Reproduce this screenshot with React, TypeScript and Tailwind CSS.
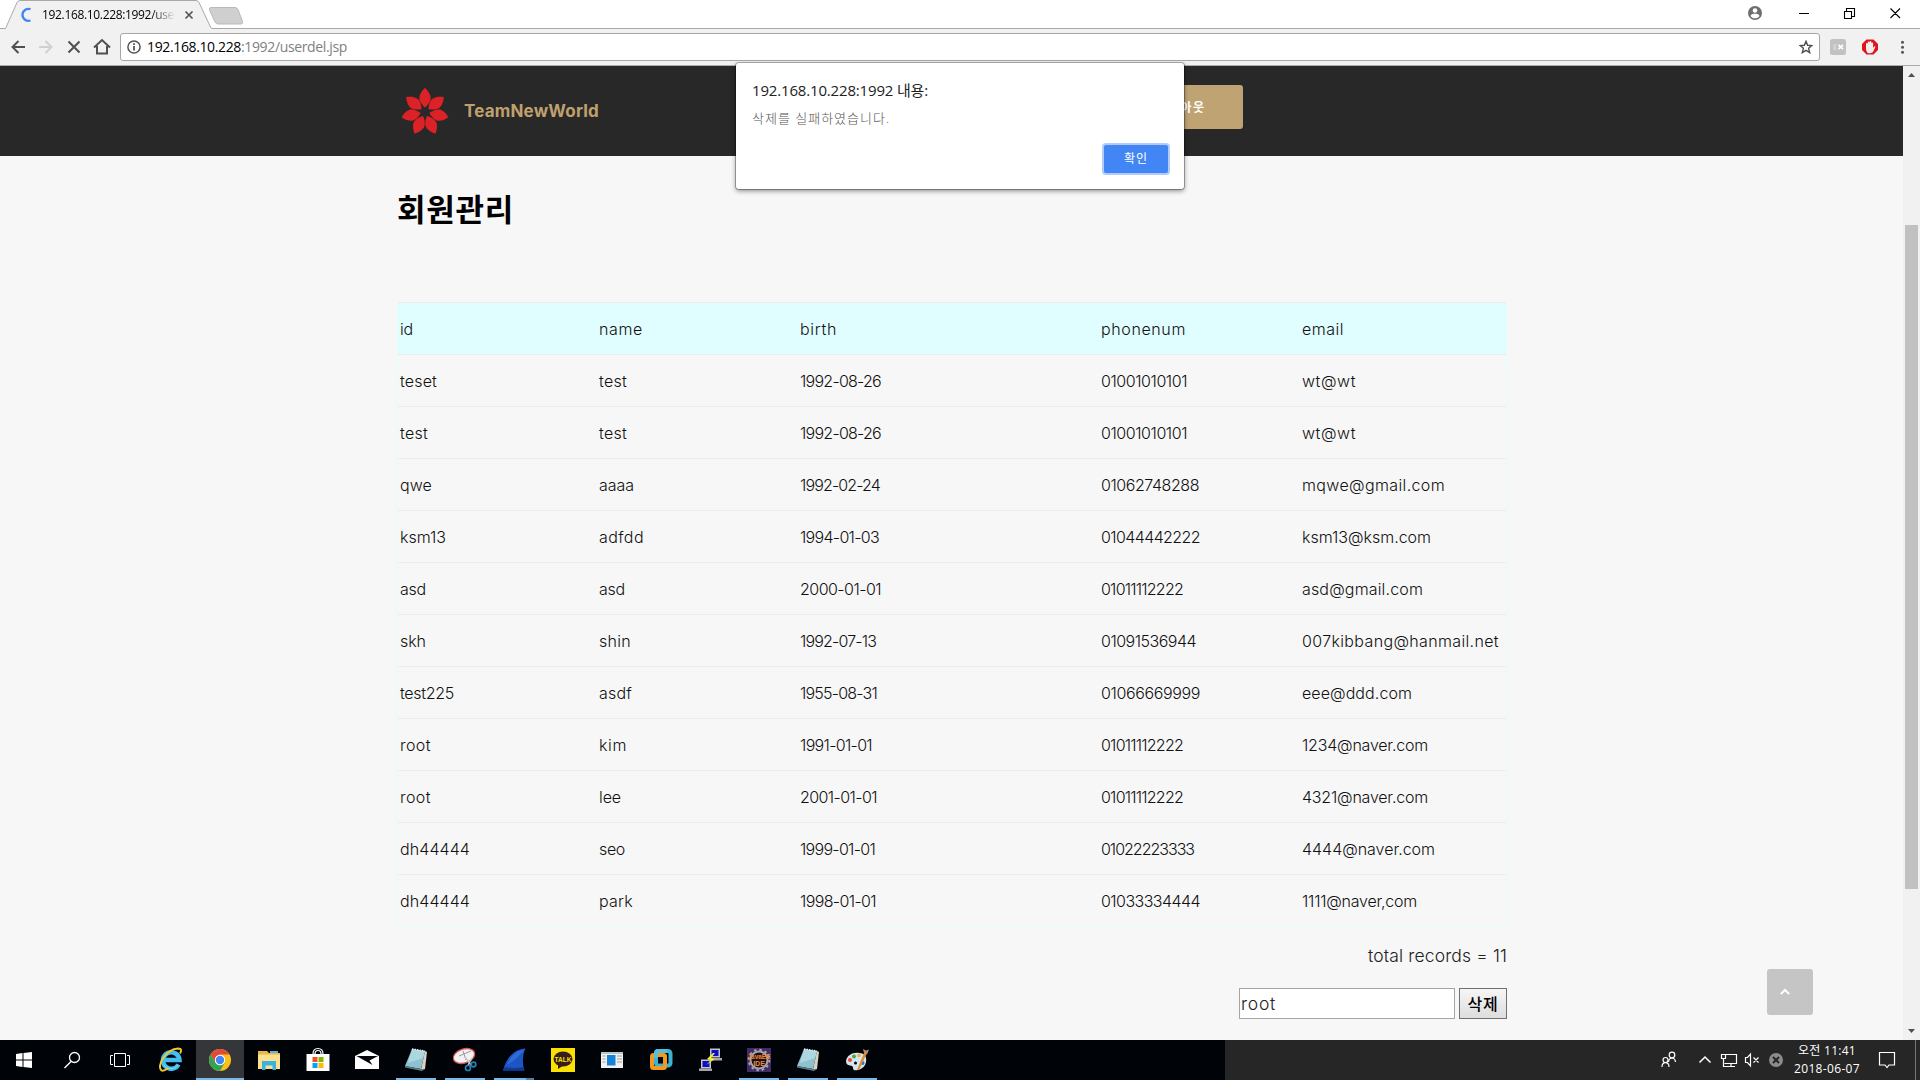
import React, { useLayoutEffect, useRef } from "react";

/** One line of text whose tracking is adjusted so that it spans `w` pixels. */
function Fit({ w, children, className = "" }: { w: number; children: string; className?: string }) {
  const ref = useRef<HTMLSpanElement>(null);
  useLayoutEffect(() => {
    const el = ref.current;
    if (!el) return;
    const apply = () => {
      el.style.letterSpacing = "0px";
      const natural = el.getBoundingClientRect().width;
      el.style.letterSpacing = `${(w - natural) / children.length}px`;
    };
    apply();
    document.fonts?.ready.then(apply);
  }, [w, children]);
  return (
    <span ref={ref} className={`inline-block whitespace-pre ${className}`}>
      {children}
    </span>
  );
}

const UI = "font-['Open_Sans','Noto_Sans_CJK_KR',sans-serif]";
const KR = "font-['Noto_Sans_CJK_KR',sans-serif]";
const BODY = "font-['Inter','Noto_Sans_CJK_KR',sans-serif]";

type Cell = [string, number];

const header: Cell[] = [["id", 13], ["name", 44], ["birth", 37], ["phonenum", 85], ["email", 42]];

const rows: Cell[][] = [
  [["teset", 37], ["test", 28], ["1992-08-26", 81], ["01001010101", 86], ["wt@wt", 54]],
  [["test", 28], ["test", 28], ["1992-08-26", 81], ["01001010101", 86], ["wt@wt", 54]],
  [["qwe", 32], ["aaaa", 35], ["1992-02-24", 80], ["01062748288", 98], ["mqwe@gmail.com", 143]],
  [["ksm13", 46], ["adfdd", 45], ["1994-01-03", 79], ["01044442222", 99], ["ksm13@ksm.com", 129]],
  [["asd", 26], ["asd", 26], ["2000-01-01", 81], ["01011112222", 82], ["asd@gmail.com", 121]],
  [["skh", 26], ["shin", 32], ["1992-07-13", 76], ["01091536944", 95], ["007kibbang@hanmail.net", 197]],
  [["test225", 54], ["asdf", 33], ["1955-08-31", 77], ["01066669999", 99], ["eee@ddd.com", 110]],
  [["root", 31], ["kim", 28], ["1991-01-01", 72], ["01011112222", 82], ["1234@naver.com", 126]],
  [["root", 31], ["lee", 22], ["2001-01-01", 77], ["01011112222", 82], ["4321@naver.com", 126]],
  [["dh44444", 70], ["seo", 26], ["1999-01-01", 75], ["01022223333", 93], ["4444@naver.com", 133]],
  [["dh44444", 70], ["park", 34], ["1998-01-01", 76], ["01033334444", 99], ["1111@naver,com", 115]],
];

function Row({ cells, head = false }: { cells: Cell[]; head?: boolean }) {
  return (
    <div
      className={`grid h-[52px] grid-cols-[199px_201px_301px_201px_1fr] items-center border-t border-[#ececec] pl-[2px] pt-px ${
        head ? "bg-[#e0fdff]" : ""
      }`}
    >
      {cells.map(([t, w], i) => (
        <div key={i} className="leading-6">
          <Fit w={w}>{t}</Fit>
        </div>
      ))}
    </div>
  );
}

function TabStrip() {
  return (
    <div className="relative flex h-7 shrink-0 items-start bg-white">
      <svg className="absolute left-0 top-0" width="1920" height="29" viewBox="0 0 1920 29" fill="none">
        <path d="M0 28.5H5.5L17 2.5Q18 .5 20 .5H196Q198 .5 199 2.5L210.500 27Q211 28.500 213 28.500H1920V30H0Z" fill="#f2f1f2" stroke="#a9a9a9" />
        <path d="M211 7.500H235Q237 7.500 238 9.500L242.500 21.500Q243 24 241 24H218Q216 24 215 22L209.500 10Q209 7.500 211 7.500Z" fill="#cfcfcf" stroke="#b9b9b9" />
        <path d="M30.500 9.200A6 6 0 1 0 30.500 20.500" stroke="#4285f4" strokeWidth="2.300" />
        <path d="m185.500 11.500 7 7m0-7-7 7" stroke="#555" strokeWidth="1.700" />
      </svg>
      <div className="relative ml-[42px] mt-[5px] w-[133px] text-[12px] leading-[19px] text-black [mask-image:linear-gradient(to_right,black_82%,transparent)]">
        <Fit w={132}>192.168.10.228:1992/use</Fit>
      </div>
      <svg className="relative ml-auto mr-[15px] mt-[5px]" width="157" height="16" viewBox="0 0 157 16" fill="none">
        <circle cx="7" cy="8" r="7" fill="#6e6e6e" />
        <circle cx="7" cy="5.500" r="2.300" fill="#fff" />
        <path d="M2.500 11C3 9 5 8.700 7 8.700S11 9 11.500 11C10.500 12.700 9 13.300 7 13.300S3.500 12.700 2.500 11Z" fill="#fff" />
        <path d="M51 8.500H61M96.500 6.500H103.500V13.500H96.500ZM98.500 6V3.500H106.500V11.500H104M142.500 3.500l9.500 9.500m0-9.500-9.500 9.500" stroke="#000" strokeWidth="1.100" />
      </svg>
    </div>
  );
}

function Toolbar() {
  return (
    <div className="flex h-[38px] shrink-0 items-center border-b border-[#aaaeab] bg-[#f2f1f2]">
      <svg width="120" height="30" viewBox="0 0 120 30" fill="none" strokeWidth="2">
        <path d="M25 15H12.500m6-6-6 6 6 6" stroke="#505050" />
        <path d="M39 15H51.500m-6-6 6 6-6 6" stroke="#d0d0d0" />
        <path d="m68.500 9.500 11 11m0-11-11 11" stroke="#505050" />
        <path d="M94 15.500 102 8l8 7.500M97 14v7.500h10V14" stroke="#505050" />
      </svg>
      <div className="flex h-7 w-[1700px] items-center rounded-[3px] border border-[#a6a6a6] bg-white pl-1.5 text-[14px] leading-none">
        <svg width="14" height="14" viewBox="0 0 14 14" fill="none" stroke="#555" strokeWidth="1.500">
          <circle cx="7" cy="7" r="6.100" />
          <path d="M7 6v4.500M7 3.300v1.600" strokeWidth="1.800" />
        </svg>
        <div className="ml-1.5 flex text-black">
          <Fit w={94}>192.168.10.228</Fit>
          <Fit w={106} className="text-[#808080]">:1992/userdel.jsp</Fit>
        </div>
        <svg className="ml-auto mr-[6px]" width="14" height="14" viewBox="0 0 14 14" fill="none" stroke="#4f4f4f" strokeWidth="1.400">
          <path d="m7 1.300 1.600 4 4.300.3-3.300 2.700 1.100 4.300L7 10.300l-3.700 2.300 1.100-4.300L1.100 5.600l4.300-.3Z" />
        </svg>
      </div>
      <svg className="ml-2.5" width="80" height="18" viewBox="0 0 80 18">
        <rect y="1" width="16" height="16" rx="2.500" fill="#c1c1c1" />
        <path d="M3 7h3.500M3 9h3M3 11h3.500" stroke="#e2e2e2" strokeWidth="1.200" fill="none" />
        <path d="m8.500 6.800 4.500 4.400m0-4.400-4.500 4.400" stroke="#fff" strokeWidth="1.700" fill="none" />
        <path d="M36.500 1.500h7l4.500 4.500v6l-4.500 4.500h-7L32 12V6Z" fill="#e0151b" />
        <path d="M36 8.500V5.700q.9-1.200 1.700 0V4.200q.9-1.300 1.800 0v-.5q1-1.300 1.900 0V5q1-1.100 1.700 0v5l1-1.500q1.300-.5 1.200.7l-2.500 5q-3 2-5.500.5-1.800-2-1.300-6.200Z" fill="#eee" />
        <g fill="#555"><circle cx="72.500" cy="4.300" r="1.500" /><circle cx="72.500" cy="9.300" r="1.500" /><circle cx="72.500" cy="14.300" r="1.500" /></g>
      </svg>
    </div>
  );
}

function Flower() {
  return (
    <svg width="48" height="48" viewBox="-24 -24 48 48" fill="#dc2127">
      {[0, 51.4, 102.8, 154.3, 205.7, 257.1, 308.6].map((a) => (
        <path key={a} transform={`rotate(${a})`} d="M0-24C2.500-22 5.700-17.500 5.700-14C5.700-10.500 2.500-6.500 0-4.500C-2.500-6.500-5.700-10.500-5.700-14C-5.700-17.500-2.500-22 0-24Z" />
      ))}
    </svg>
  );
}

function SiteHeader() {
  return (
    <div className="flex h-[90px] shrink-0 items-center bg-[#282828] pl-[401px]">
      <div className="pt-px"><Flower /></div>
      <div className="ml-[15px] w-[135px] text-[17px] font-bold leading-6 text-[#c0a16e]">
        <Fit w={135}>TeamNewWorld</Fit>
      </div>
      <div className="ml-[517px] mb-2 flex h-11 w-[127px] items-center justify-center rounded-[3px] bg-[#bfa373] pl-[2px] pt-px text-[12px] font-bold text-white">
        <Fit w={50}>로그아웃</Fit>
      </div>
    </div>
  );
}

function Scrollbar() {
  return (
    <div className="flex h-full w-[17px] shrink-0 flex-col items-center bg-[#f1f1f1]">
      <svg className="shrink-0" width="17" height="17" viewBox="0 0 17 17" fill="#505050"><path d="M5 11 8.500 7 12 11Z" /></svg>
      <div className="mt-[142px] h-[664px] w-[13px] bg-[#c1c1c1]" />
      <svg className="mt-auto shrink-0" width="17" height="17" viewBox="0 0 17 17" fill="#505050"><path d="M5 6 8.500 10 12 6Z" /></svg>
    </div>
  );
}

function Page() {
  return (
    <div className={`flex h-[974px] shrink-0 ${BODY}`}>
      <div className="relative flex min-w-0 flex-1 flex-col bg-[#f7f7f7]">
        <SiteHeader />
        <div className="flex w-[1507px] flex-col pl-[397px]">
          <h1 className={`mt-[28px] h-[118px] text-[31px] font-bold leading-[48px] text-black ${KR}`}>
            <Fit w={117}>회원관리</Fit>
          </h1>
          <div className="border-x border-b border-[#e0ffff] text-[16px] font-light text-[#111]">
            <Row cells={header} head />
            {rows.map((r, i) => <Row key={i} cells={r} />)}
          </div>
          <div className="mt-[15px] flex h-7 items-center justify-end text-[17.5px] font-light text-[#222]">
            <Fit w={139}>total records = 11</Fit>
          </div>
          <div className="mt-[18px] flex justify-end gap-1">
            <div className="flex h-[31px] w-[216px] items-center border border-[#a5a5a5] bg-white pl-px pt-[2px] text-[17.5px] font-light text-[#222]">
              <Fit w={35}>root</Fit>
            </div>
            <button className={`flex h-[31px] w-12 items-center justify-center border border-[#707070] bg-linear-to-b from-[#f6f6f6] to-[#dddddd] pb-[2px] text-[16px] font-medium leading-none text-black ${KR}`}>
              <Fit w={31}>삭제</Fit>
            </button>
          </div>
        </div>
        <div className="absolute left-[1767px] top-[903px] flex h-[46px] w-[46px] items-center rounded-[3px] bg-[#c5c5c5] pl-[13px]">
          <svg width="10" height="8" viewBox="0 0 10 8" fill="none" stroke="#fff" strokeWidth="2"><path d="m.8 6 4.200-4 4.200 4" /></svg>
        </div>
      </div>
      <Scrollbar />
    </div>
  );
}

function Dialog() {
  return (
    <div className={`absolute left-[736px] top-[63px] flex h-[126px] w-[448px] flex-col rounded-[3px] bg-white px-4 shadow-[0_0_0_1px_rgba(0,0,0,0.28),0_2px_5px_rgba(0,0,0,0.45)] ${UI}`}>
      <div className="mt-[17px] h-5 text-[15px] leading-5 text-[#222]"><Fit w={176}>192.168.10.228:1992 내용:</Fit></div>
      <div className="mt-[8px] h-5 text-[13px] font-light leading-5 text-[#555]"><Fit w={138}>삭제를 실패하였습니다.</Fit></div>
      <button className="ml-[352px] mt-[17px] flex h-[28px] w-[64px] items-center justify-center rounded-[2px] bg-[#4285f4] text-[12px] text-white ring-2 ring-[#b0ccfb]">
        <Fit w={24}>확인</Fit>
      </button>
    </div>
  );
}

const notepad = (
  <g>
    <path d="M10 3 23 5 19 23 3 20Z" fill="#8fc2cf" /><path d="M10 3 23 5 21 12 6 17Z" fill="#b8dfe8" opacity=".7" />
    <path d="m23 5 2 1-2 17-4 .5Z" fill="#d8d2c4" /><path d="m3 20 16 3 4 0-3 2L3 21.500Z" fill="#5b7f89" />
    <path d="M10 3 23 5" stroke="#dfeff3" strokeWidth="1.500" strokeDasharray="1.500 1" />
  </g>
);

const apps: { name: string; mark?: "full" | "open" | "multi"; art: React.ReactNode }[] = [
  { name: "ie", art: <g fill="none">
    <path d="M21.500 18.500A8.300 8.300 0 1 1 22.500 14H7" stroke="#45bdf0" strokeWidth="4.500" />
    <path d="M21 19A8.500 8.500 0 0 1 7 19" stroke="#7bdcff" strokeWidth="1" />
    <path d="M4.500 24.500C-1 20 9 3 21 2.500 25 2.500 24.500 5 23 7.500 M4.500 24.500C6.500 25.500 10 23 11.500 22" stroke="#f5c52b" strokeWidth="1.900" /></g> },
  { name: "chrome", mark: "full", art: <g>
    <circle cx="14" cy="14" r="11" fill="#fbc116" /><path d="M4.500 8.500A11 11 0 0 1 23.500 8.500H14L9.200 16.800Z" fill="#df4a3c" />
    <path d="M4.500 8.500A11 11 0 0 0 14 25L18.700 16.800H9.300Z" fill="#31a353" /><circle cx="14" cy="14" r="5.200" fill="#fff" /><circle cx="14" cy="14" r="4.200" fill="#4285f4" /></g> },
  { name: "explorer", art: <g>
    <path d="M3 5h9l2 2h11v16H3Z" fill="#e9b84b" /><path d="M3 8.500h22V23H3Z" fill="#fbe08e" /><path d="M15 5h8v2h-8Z" fill="#5bb9e7" />
    <path d="M7 24V15h14v9h-3.500v-4.500h-7V24Z" fill="#3bb1e3" /></g> },
  { name: "store", art: <g>
    <path d="M2.500 8h23v17h-23Z" fill="#fff" /><path d="M9 8Q9 2.500 14 2.500T19 8M11 8q0-3.500 3-3.500T17 8" fill="none" stroke="#fff" strokeWidth="1.200" />
    <path d="M8.500 11h5v5h-5Z" fill="#f25022" /><path d="M14.500 11h5v5h-5Z" fill="#7fba00" /><path d="M8.500 17h5v5h-5Z" fill="#00a4ef" /><path d="M14.500 17h5v5h-5Z" fill="#ffb900" /></g> },
  { name: "mail", art: <g><path d="M2 10 14 4l12 6v13H2Z" fill="#fff" /><path d="M3.500 10H25l-8.500 4.500 3 4.500Z" fill="#02050a" /></g> },
  { name: "notepad", mark: "open", art: notepad },
  { name: "snip", mark: "open", art: <g fill="none">
    <ellipse cx="13" cy="10" rx="11" ry="7" transform="rotate(-18 13 10)" fill="#f2f2f2" stroke="#d0555a" strokeWidth="1.300" />
    <path d="m8 10 12-5m-8 0 3 9" stroke="#999" /><path d="m14 11 6 8m1-7-4 7" stroke="#c9c9c9" strokeWidth="1.500" />
    <circle cx="17" cy="22" r="2.500" stroke="#2482b5" strokeWidth="1.700" /><circle cx="22.500" cy="18.500" r="2.300" stroke="#2482b5" strokeWidth="1.700" /></g> },
  { name: "shark", mark: "multi", art: <g><path d="M3 24.500C6 12 14 3 25.500 2.500 22.500 9 22 17 24.500 24.500Z" fill="#1c55c4" /><path d="M7 19C11 9 17 5 24 3.500 20 10 12 16 7 19Z" fill="#3f7be0" opacity=".6" /><path d="M3 24.500 5 21q8 2 18.500 0l1 3.500Z" fill="#123a94" /></g> },
  { name: "talk", art: <g>
    <path d="M2 2h24v24H2Z" fill="#fae100" /><ellipse cx="14" cy="13" rx="9.500" ry="7.500" fill="#371d1e" /><path d="m9 17 0 6 6-4Z" fill="#371d1e" />
    <text x="14" y="15.500" textAnchor="middle" fontSize="6.500" fontWeight="700" fontFamily="Liberation Sans" fill="#fae100">TALK</text></g> },
  { name: "app", art: <g><path d="M3 6h22v16H3Z" fill="#f2f2f2" /><path d="M3 6h22v2H3Z" fill="#b9c5cc" /><path d="M9 9h8.500v10.500H9Z" fill="#1683d8" /><path d="M4.500 10h3m-3 3h3m-3 3h3m11.500-6h5m-5 3h5m-5 3h5" stroke="#9c9c9c" /></g> },
  { name: "vm", art: <g fill="none" strokeWidth="4"><rect x="9" y="5" width="14.500" height="14.500" rx="2.500" stroke="#3db3d3" /><rect x="5" y="9" width="13" height="13" rx="1.500" stroke="#f09a22" /><path d="M9 12V6.500Q9 5 11 5h9" stroke="#56bfdc" /></g> },
  { name: "putty", art: <g>
    <path d="M14 2.500h10v9H14ZM5 13.500h10v9H5Z" fill="#c5c5c5" /><path d="M15.500 4h7v6h-7ZM6.500 15h7v6h-7Z" fill="#0a10c9" />
    <path d="M12 12h14v2.500H12ZM3 22.500h13V25H3Z" fill="#a6a6a6" /><path d="m17 7-6 6 4 1-5 5 9-6-4-1 4-5Z" fill="#f8f12b" /></g> },
  { name: "ide", mark: "open", art: <g>
    <path d="M2 2h24v24H2Z" fill="#402d66" /><circle cx="14" cy="14" r="8.500" fill="#161120" stroke="#aaa4aa" strokeWidth="2" /><circle cx="14" cy="14" r="10.300" fill="none" stroke="#aaa4aa" strokeWidth="2" strokeDasharray="2.500 2.900" />
    <g fontFamily="Liberation Sans" fontWeight="700" fill="#f08a30" textAnchor="middle"><text x="14" y="13" fontSize="6.500" textLength="23" lengthAdjust="spacingAndGlyphs">JavaEE</text><text x="14" y="19.500" fontSize="7">IDE</text></g></g> },
  { name: "notepad2", mark: "open", art: notepad },
  { name: "paint", mark: "open", art: <g>
    <path d="M3 15C4 9 10 6 16 7c6 0 8 4 7 9-1 7-9 9-12 8-2-1 0-3-2-4s-6 0-6-5Z" fill="#d4e5ef" />
    <circle cx="7" cy="14" r="2" fill="#e74c3c" /><circle cx="11" cy="10.500" r="1.900" fill="#48a53e" /><circle cx="16" cy="9.500" r="1.800" fill="#f3b229" /><circle cx="19.500" cy="17" r="2" fill="#2877c9" /><circle cx="12.500" cy="17" r="1.500" fill="#02050a" />
    <path d="m14 24 7.500-18 2.500 1-8 17Z" fill="#e18a2f" /><path d="m21 7-1-4 3 1.500 3-1-2 5Z" fill="#b98d68" /></g> },
];

function Taskbar() {
  return (
    <div className={`flex h-10 shrink-0 bg-[#262626] text-white ${UI}`}>
      <div className="flex h-10 w-[1225px] bg-[#000308]">
        <svg width="147" height="40" viewBox="0 0 147 40" fill="none" stroke="#fff">
          <path d="m16 14 6.500-1v6.500H16Zm7.500-1.100L32 12v7.500h-8.500ZM16 20.500h6.500V27L16 26Zm7.500 0H32V28l-8.500-1Z" fill="#fff" stroke="none" />
          <circle cx="74.500" cy="17.500" r="5" strokeWidth="1.300" /><path d="m71 21.500-6.500 6.500" strokeWidth="1.500" />
          <path d="M114.500 13.500h11v13h-11ZM113 15.500h-2.500v9H113M127 15.500h2.500v9H127" />
        </svg>
        <div className="flex gap-px">
          {apps.map((a) => (
            <div key={a.name} className={`flex h-10 w-12 flex-col items-center ${a.mark === "full" ? "bg-[#35363a]" : ""}`}>
              <svg className="mt-1.5 shrink-0" width="28" height="28" viewBox="0 0 28 28">{a.art}</svg>
              {a.mark && (
                <div className={`mt-auto flex h-0.5 bg-[#76b9ed] ${a.mark === "full" ? "w-12" : "w-10"}`}>
                  {a.mark === "multi" && <div className="ml-auto h-0.5 w-2 bg-[#4f7fa5]" />}
                </div>
              )}
            </div>
          ))}
        </div>
      </div>
      <svg className="ml-[433px]" width="128" height="40" viewBox="1658 0 128 40" fill="none" stroke="#fff" strokeWidth="1.200">
        <circle cx="1672" cy="15" r="2.800" /><circle cx="1665.500" cy="20" r="2.500" /><path d="M1668.500 22q.500-4 3.500-4t3.500 4M1662 27q0-4.300 3.500-4.300t3.500 4.300" />
        <path d="m1699.500 22.500 5.500-5.500 5.500 5.500" strokeWidth="1.500" />
        <path d="M1725 14.500H1736.500V23.500H1724.500M1731 24v3M1726 26.500h9M1721.500 14.500h4v4h-4ZM1723.500 18.500v8h4" />
        <path d="M1745.500 17.500h2l3-3.500v12l-3-3.500h-2ZM1753.500 17.500l5 5m0-5-5 5" />
        <circle cx="1776" cy="20" r="7" fill="#8b8b8b" stroke="none" /><path d="m1773 17 6 6m0-6-6 6" stroke="#222" strokeWidth="1.800" />
      </svg>
      <div className="ml-2 flex w-[66px] flex-col items-center text-[12px] leading-[18px]">
        <div className="mt-[2px] h-[18px]"><Fit w={58}>오전 11:41</Fit></div>
        <div className="h-[18px]"><Fit w={66}>2018-06-07</Fit></div>
      </div>
      <svg className="ml-[18px]" width="18" height="40" viewBox="0 0 18 40" fill="none" stroke="#fff" strokeWidth="1.200"><path d="M1.500 12.500h15v12.500h-5.500l-2 2.500-2-2.500H1.500Z" /></svg>
      <div className="ml-[19px] h-10 w-px bg-[#777]" />
    </div>
  );
}

export default function App() {
  return (
    <div className={`relative flex h-[1080px] w-[1920px] flex-col overflow-hidden ${UI}`}>
      <TabStrip />
      <Toolbar />
      <Page />
      <Taskbar />
      <Dialog />
    </div>
  );
}
